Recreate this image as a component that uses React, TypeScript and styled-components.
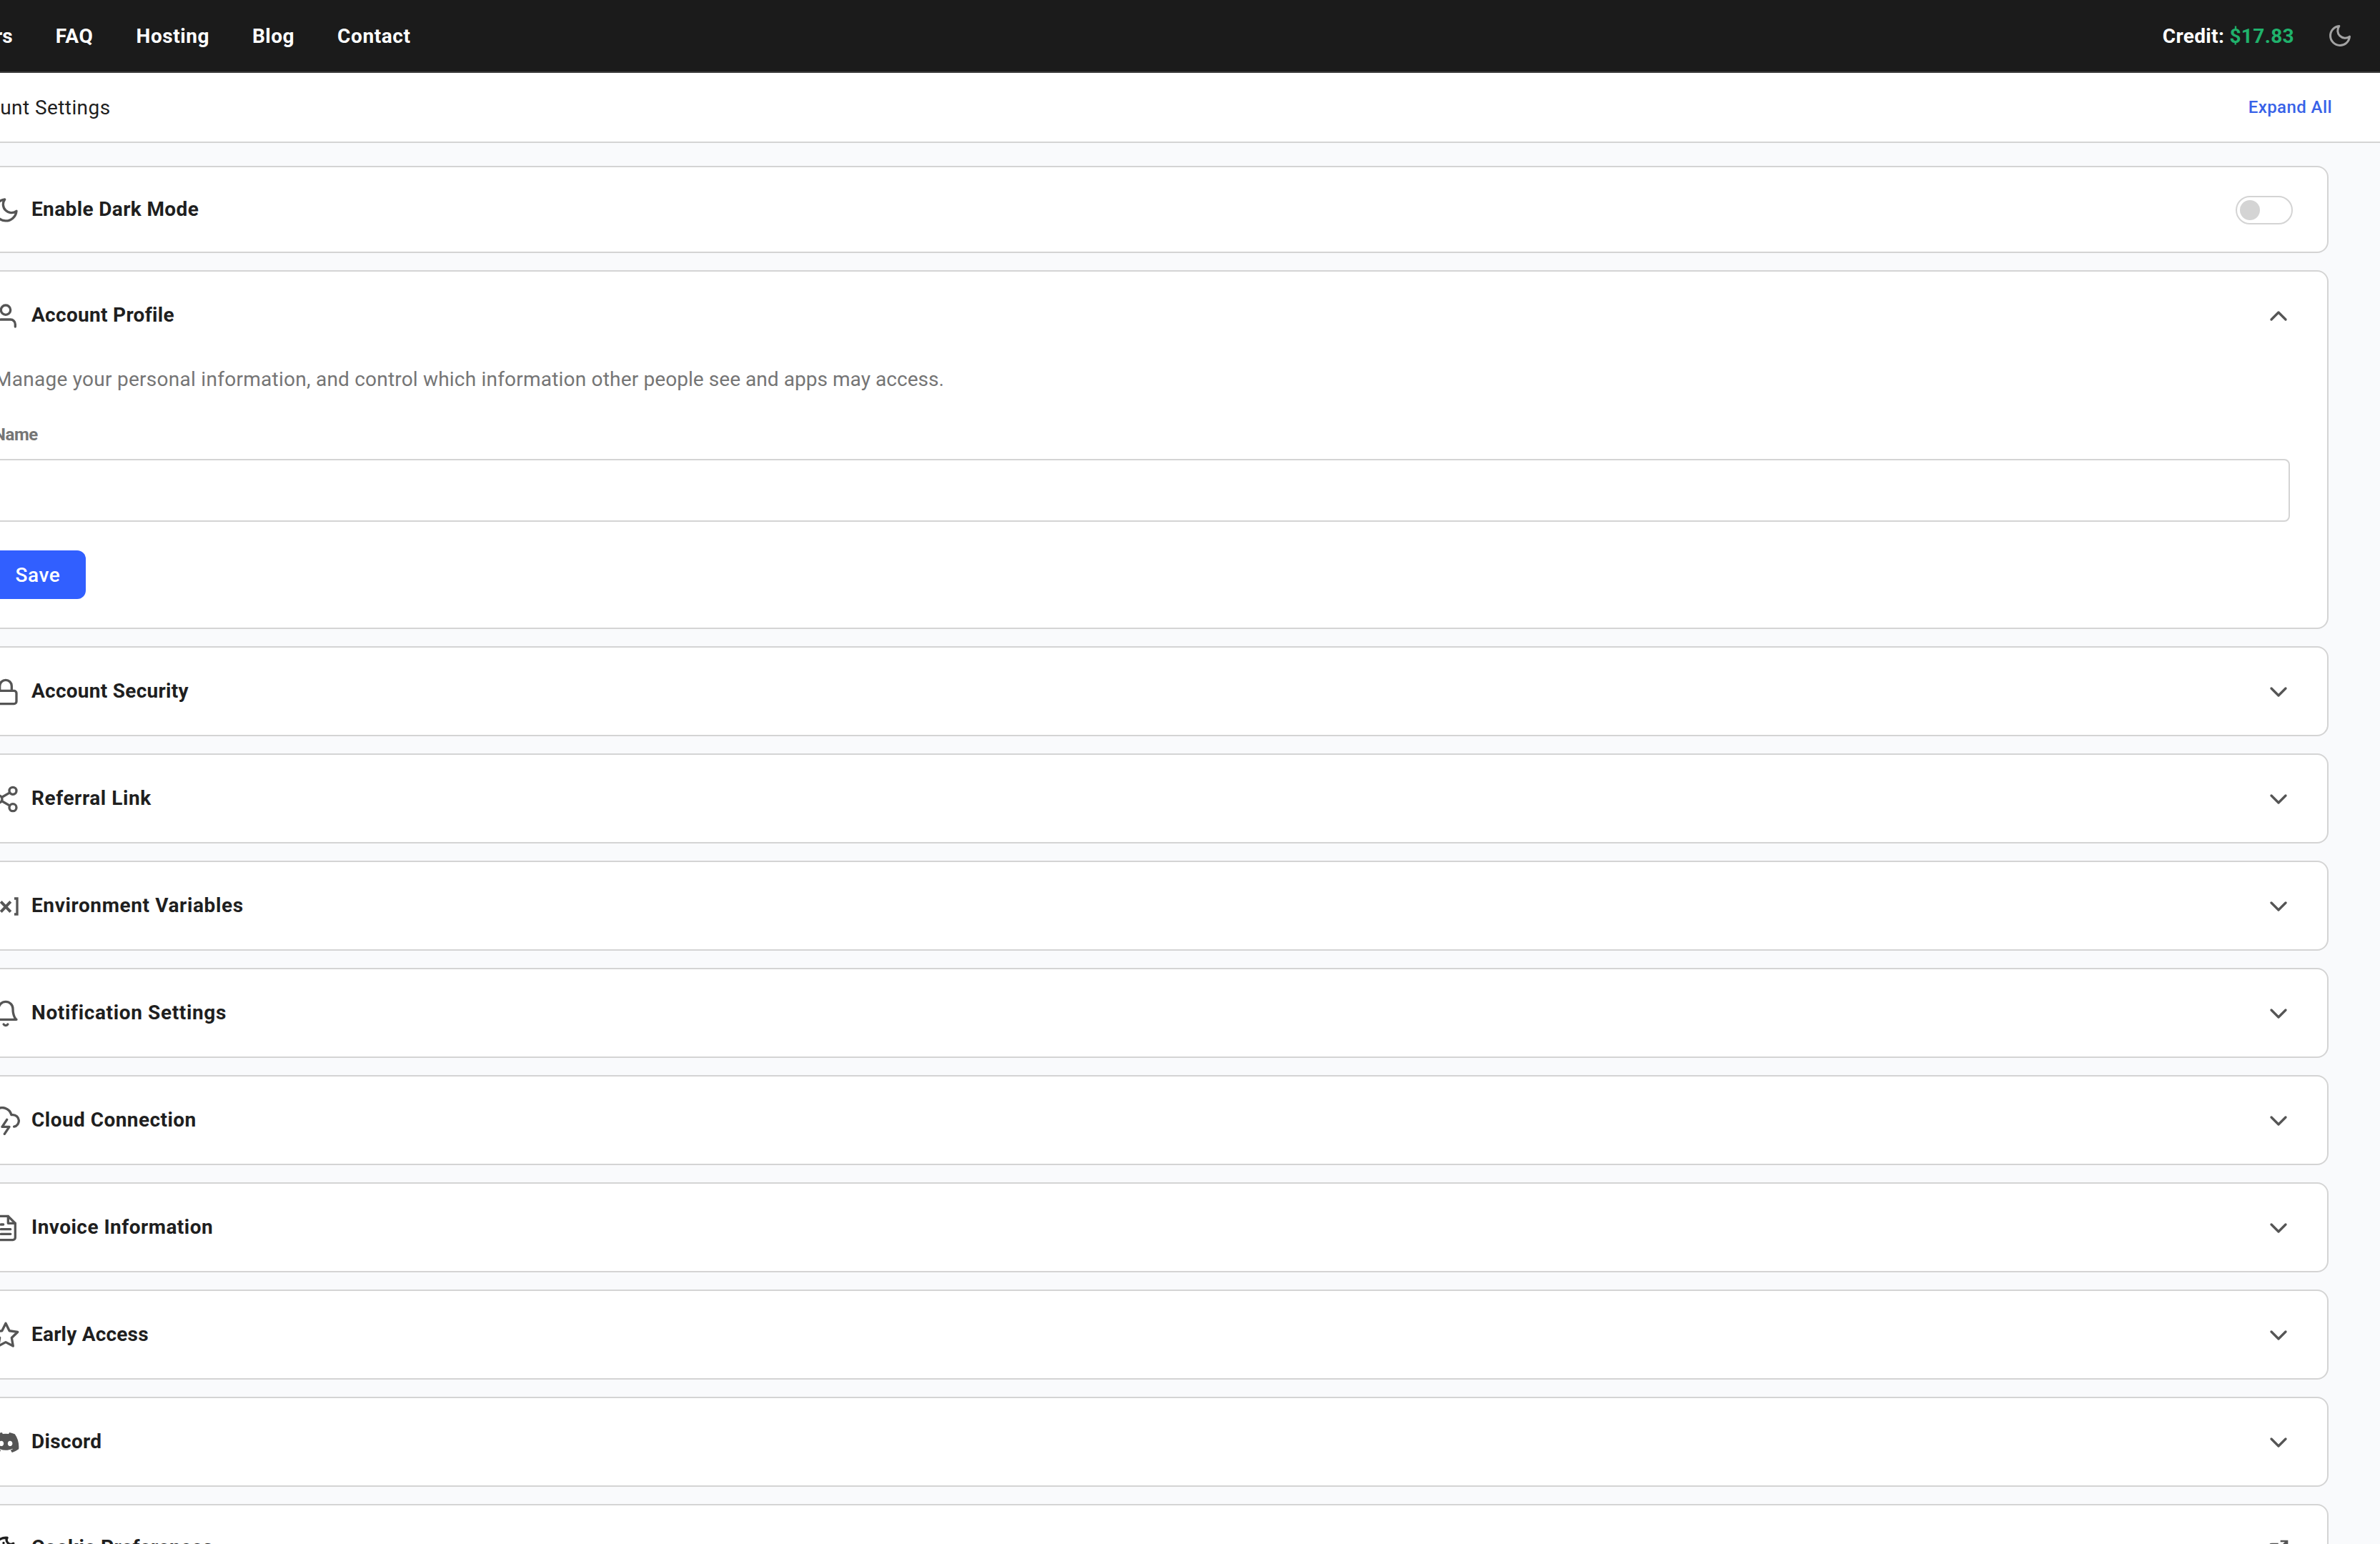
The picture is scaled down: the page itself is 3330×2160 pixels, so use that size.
import React from "react";
import styled, { createGlobalStyle } from "styled-components";
import type { IconType } from "react-icons";
import {
  FiBell,
  FiChevronDown,
  FiChevronUp,
  FiCloudLightning,
  FiFileText,
  FiLock,
  FiMoon,
  FiShare2,
  FiStar,
  FiUser,
} from "react-icons/fi";
import { FaDiscord } from "react-icons/fa";

const GlobalStyle = createGlobalStyle`
  * { box-sizing: border-box; }
  html, body { margin: 0; padding: 0; overflow: hidden; }
  body {
    background: #f9fafc;
    color: #1f1f1f;
    font-family: Roboto, "Liberation Sans", sans-serif;
    font-size: 28px;
    font-variant-ligatures: none;
  }
`;

const Page = styled.div`
  height: 2160px;
  overflow: hidden;
`;

const NavBar = styled.header`
  display: flex;
  align-items: center;
  justify-content: space-between;
  height: 102px;
  padding: 0 38px 0 0;
  background: #1b1b1b;
  border-bottom: 2px solid #3f3f3f;
`;

const NavLinks = styled.nav`
  display: flex;
  gap: 60px;
  margin: 1px 0 0 -79px;
`;

const NavLink = styled.a<{ $tracking: number }>`
  color: #ffffff;
  font-weight: 700;
  line-height: 40px;
  letter-spacing: ${(p) => p.$tracking}px;
`;

const NavEnd = styled.div`
  display: flex;
  align-items: center;
  gap: 46px;
`;

const Credit = styled.span`
  margin-top: 1px;
  color: #ffffff;
  font-weight: 700;
  line-height: 40px;
  letter-spacing: 0.35px;
`;

const CreditAmount = styled.span`
  color: #20b26c;
`;

const ThemeIcon = styled(FiMoon)`
  width: 36px;
  height: 36px;
  color: #a3a3a3;
`;

const SubHeader = styled.div`
  display: flex;
  align-items: center;
  justify-content: space-between;
  height: 98px;
  padding: 0 67px 0 0;
  background: #ffffff;
  border-bottom: 2px solid #d4d4d4;
`;

const PageTitle = styled.h1`
  margin: 2px 0 0 -65px;
  font-size: 28px;
  font-weight: 400;
  line-height: 40px;
  letter-spacing: 0.42px;
`;

const ExpandAll = styled.button`
  padding: 0;
  border: 0;
  background: none;
  color: #3862e8;
  font: 500 24px/36px Roboto, sans-serif;
  letter-spacing: 0.42px;
`;

const Sections = styled.main`
  display: flex;
  flex-direction: column;
  gap: 24px;
  margin-left: -62px;
  padding: 32px 72px 0 0;
`;

const Card = styled.section`
  border: 2px solid #d4d4d4;
  border-radius: 16px;
  background: #ffffff;
`;

const CardHeader = styled.div<{ $compact?: boolean }>`
  display: flex;
  align-items: center;
  height: ${(p) => (p.$compact ? 118 : 122)}px;
  padding: 2px 48px 0;
  color: #555555;
`;

const CardTitle = styled.h2<{ $tracking: number; $raised?: boolean }>`
  flex: 1;
  margin: ${(p) => (p.$raised ? -7 : -3)}px 0 0 16px;
  color: #1f1f1f;
  font-size: 28px;
  font-weight: 700;
  line-height: 40px;
  letter-spacing: ${(p) => p.$tracking}px;
`;

const IconSlot = styled.span<{ $size?: number; $dark?: boolean }>`
  display: flex;
  align-items: center;
  justify-content: center;
  width: 40px;
  height: 40px;
  color: ${(p) => (p.$dark ? "#1f1f1f" : "#555555")};
  svg {
    width: ${(p) => p.$size ?? 40}px;
    height: ${(p) => p.$size ?? 40}px;
  }
`;

const Toggle = styled.button`
  display: flex;
  align-items: center;
  width: 80px;
  height: 40px;
  padding: 0 4px;
  border: 2px solid #d4d4d4;
  border-radius: 20px;
  background: #ffffff;
`;

const Knob = styled.span`
  width: 28px;
  height: 28px;
  border-radius: 50%;
  background: #d4d4d4;
`;

const CardBody = styled.form`
  display: flex;
  flex-direction: column;
  align-items: flex-start;
  padding: 9px 52px 40px;
`;

const Description = styled.p`
  margin: 0;
  color: #757575;
  line-height: 40px;
`;

const Phrase = styled.span<{ $tracking: number }>`
  letter-spacing: ${(p) => p.$tracking}px;
`;

const FieldLabel = styled.label`
  margin: 39px 0 0 -1px;
  color: #757575;
  font-size: 24px;
  font-weight: 700;
  line-height: 36px;
  letter-spacing: -0.4px;
`;

const TextInput = styled.input`
  width: 100%;
  height: 88px;
  margin-top: 16px;
  padding: 0 24px;
  border: 2px solid #d4d4d4;
  border-radius: 8px;
  background: #ffffff;
  font: inherit;
`;

const SaveButton = styled.button`
  width: 134px;
  height: 68px;
  margin: 40px 0 0 -6px;
  padding: 1px 0 0;
  border: 0;
  border-radius: 12px;
  background: #315fff;
  color: #ffffff;
  font: 500 28px/40px Roboto, sans-serif;
  letter-spacing: 0.6px;
`;

const VariableIcon = () => (
  <svg viewBox="0 0 24 24" fill="none" stroke="currentColor" strokeWidth="2">
    <path d="M4.8 5.4H2.4v13.2h2.4M19.2 5.4h2.4v13.2h-2.4" />
    <path d="M7.9 8l8.2 8.6M16.1 8l-8.2 8.6" strokeWidth="2.4" />
  </svg>
);

const CookieIcon = () => (
  <svg
    viewBox="0 0 24 24"
    fill="none"
    stroke="currentColor"
    strokeWidth="2"
    strokeLinecap="round"
    strokeLinejoin="round"
  >
    <path d="M13.2 2a10 10 0 1 0 8.8 11 4 4 0 0 1-3.6-6.3A3.6 3.6 0 0 1 13.2 2" />
    <path d="M10.2 6.3v.01M16 15.5v.01M12 12v.01M7.5 13.5v.01M11 17v.01" />
  </svg>
);

const ExternalIcon = () => (
  <svg viewBox="0 0 24 24" fill="none" stroke="currentColor" strokeWidth="2">
    <path d="M11.8 6H5a2 2 0 0 0-2 2v11a2 2 0 0 0 2 2h11a2 2 0 0 0 2-2v-6.8" />
    <path d="M14 3h7v7M21 3L10 14" />
  </svg>
);

const links = [
  { label: "Servers", tracking: 0 },
  { label: "FAQ", tracking: 0.75 },
  { label: "Hosting", tracking: 0.55 },
  { label: "Blog", tracking: 0.5 },
  { label: "Contact", tracking: 0.6 },
];

type Item = {
  title: string;
  icon: IconType | React.FC;
  tracking: number;
  dark?: boolean;
  external?: boolean;
};

const items: Item[] = [
  { title: "Account Security", icon: FiLock, tracking: 0.27 },
  { title: "Referral Link", icon: FiShare2, tracking: 0.56 },
  { title: "Environment Variables", icon: VariableIcon, tracking: 0.61 },
  { title: "Notification Settings", icon: FiBell, tracking: 0.64 },
  { title: "Cloud Connection", icon: FiCloudLightning, tracking: 0.45 },
  { title: "Invoice Information", icon: FiFileText, tracking: 0.46 },
  { title: "Early Access", icon: FiStar, tracking: 0.2 },
  { title: "Discord", icon: FaDiscord, tracking: 0.33 },
  { title: "Cookie Preferences", icon: CookieIcon, tracking: 0.39, dark: true, external: true },
];

export default function App() {
  return (
    <Page>
      <GlobalStyle />
      <NavBar>
        <NavLinks>
          {links.map(({ label, tracking }) => (
            <NavLink key={label} $tracking={tracking}>{label}</NavLink>
          ))}
        </NavLinks>
        <NavEnd>
          <Credit>
            Credit: <CreditAmount>$17.83</CreditAmount>
          </Credit>
          <ThemeIcon />
        </NavEnd>
      </NavBar>
      <SubHeader>
        <PageTitle>Account Settings</PageTitle>
        <ExpandAll>Expand All</ExpandAll>
      </SubHeader>
      <Sections>
        <Card>
          <CardHeader $compact>
            <IconSlot><FiMoon /></IconSlot>
            <CardTitle $tracking={0.37}>Enable Dark Mode</CardTitle>
            <Toggle><Knob /></Toggle>
          </CardHeader>
        </Card>
        <Card>
          <CardHeader>
            <IconSlot><FiUser /></IconSlot>
            <CardTitle $tracking={0.31}>Account Profile</CardTitle>
            <IconSlot><FiChevronUp /></IconSlot>
          </CardHeader>
          <CardBody>
            <Description>
              <Phrase $tracking={0.27}>Manage your personal information, </Phrase>
              <Phrase $tracking={0.2}>and control which information other </Phrase>
              <Phrase $tracking={0.05}>people see and apps may access.</Phrase>
            </Description>
            <FieldLabel>Name</FieldLabel>
            <TextInput />
            <SaveButton type="button">Save</SaveButton>
          </CardBody>
        </Card>
        {items.map(({ title, icon: Icon, tracking, dark, external }) => (
          <Card key={title}>
            <CardHeader>
              <IconSlot $dark={dark}><Icon /></IconSlot>
              <CardTitle $tracking={tracking} $raised={external}>{title}</CardTitle>
              <IconSlot $size={external ? 32 : 40}>
                {external ? <ExternalIcon /> : <FiChevronDown />}
              </IconSlot>
            </CardHeader>
          </Card>
        ))}
      </Sections>
    </Page>
  );
}
